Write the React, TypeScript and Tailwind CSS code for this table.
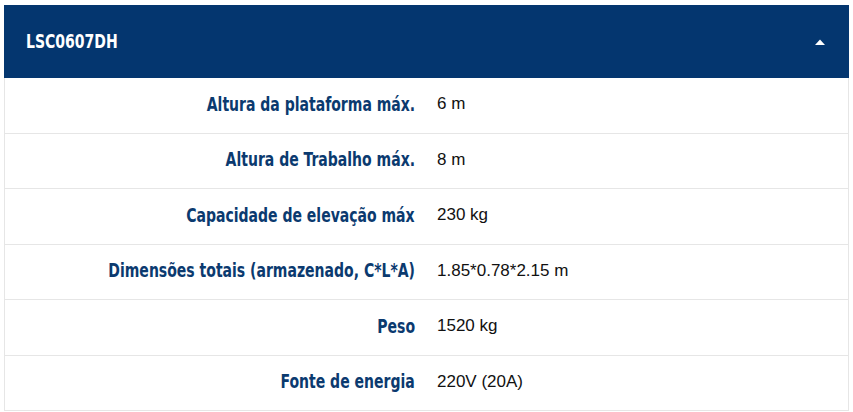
import React from 'react';

const specs = [
  { label: 'Altura da plataforma máx.', value: '6 m' },
  { label: 'Altura de Trabalho máx.', value: '8 m' },
  { label: 'Capacidade de elevação máx', value: '230 kg' },
  { label: 'Dimensões totais (armazenado, C*L*A)', value: '1.85*0.78*2.15 m' },
  { label: 'Peso', value: '1520 kg' },
  { label: 'Fonte de energia', value: '220V (20A)' },
];

// condensed bold face, squeezed a bit more to match the narrow headline font
const narrow = "font-['DejaVu_Sans_Condensed',sans-serif] font-bold inline-block scale-x-[0.82]";

export default function App() {
  return (
    <div className="min-h-screen bg-white pt-[5px] pl-[4px] pr-[4px]">
      <div className="w-[845px] border-x border-[#e6e6e6]">
        {/* Header */}
        <div className="h-[73px] bg-[#04366f] flex items-center justify-between pl-[22px] pr-[22px] -mx-px">
          <h2 className={`${narrow} origin-left text-white text-[19px]`}>LSC0607DH</h2>
          <svg width="12" height="8" viewBox="0 0 12 8" className="mr-[1px]">
            <path d="M1 7 L6 1.5 L11 7 Z" fill="white" />
          </svg>
        </div>

        {/* Spec rows */}
        {specs.map((s) => (
          <div key={s.label} className="grid grid-cols-[430px_1fr] h-[55.5px] border-b border-[#e6e6e6] items-center">
            <div className="text-right pr-[20px] -mt-[3px]">
              <span className={`${narrow} origin-right text-[#0b3a6f] text-[19px] whitespace-nowrap`}>{s.label}</span>
            </div>
            <div className="font-['Liberation_Sans',Arial,sans-serif] text-[17px] text-[#111] pl-[2px] -mt-[3px]">{s.value}</div>
          </div>
        ))}
      </div>
    </div>
  );
}
